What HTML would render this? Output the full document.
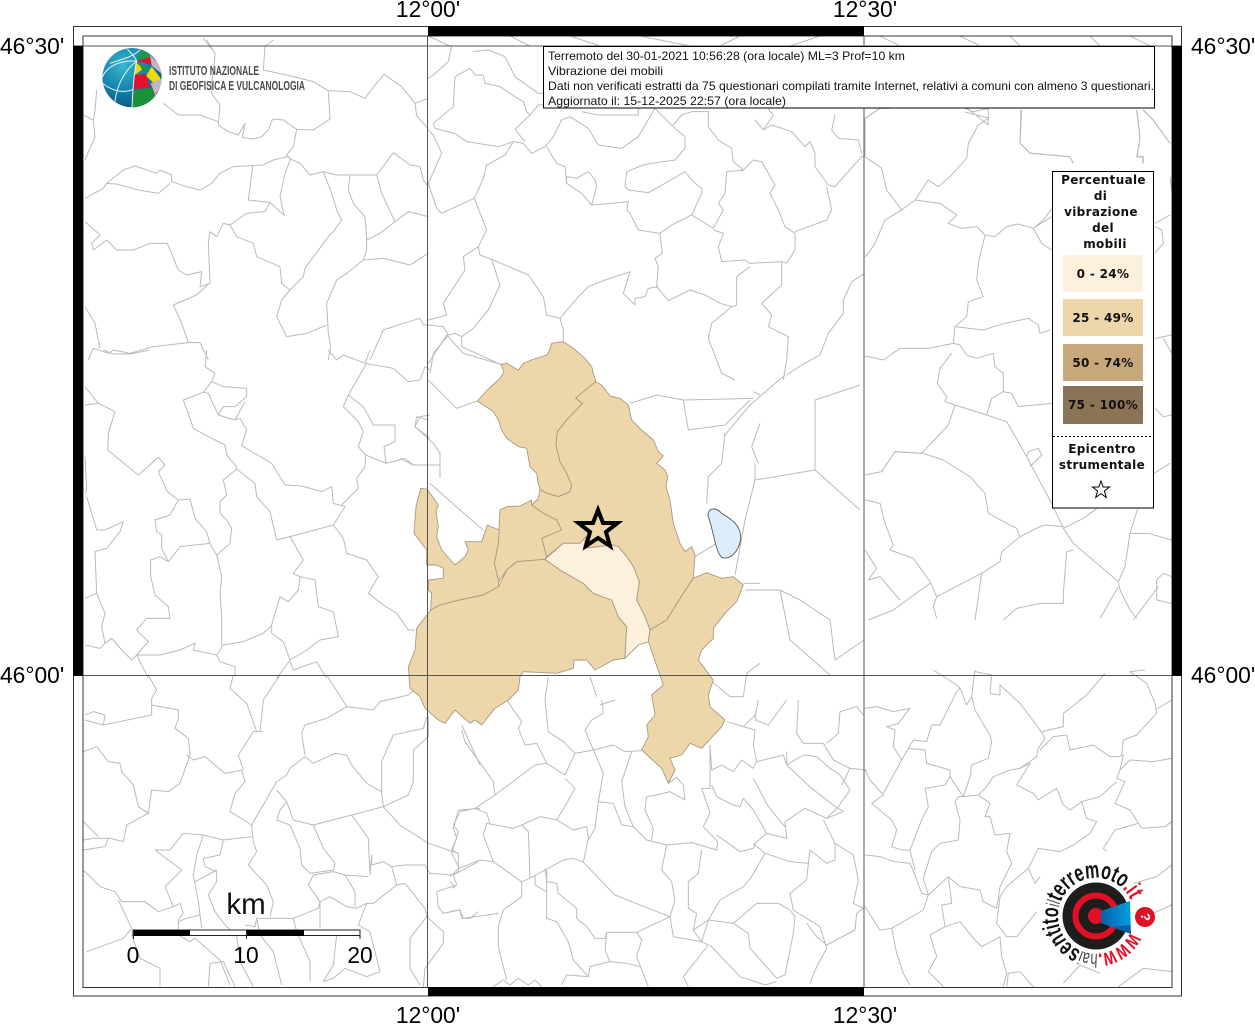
<!DOCTYPE html>
<html><head><meta charset="utf-8"><title>Vibrazione dei mobili</title>
<style>
html,body{margin:0;padding:0;background:#fff;width:1255px;height:1024px;overflow:hidden}
svg{display:block;position:absolute;left:0;top:0}
.m path{fill:none;stroke:#bababa;stroke-width:1;vector-effect:non-scaling-stroke;stroke-linejoin:round}
.r path{fill:#edd6a9;stroke:#a89a80;stroke-width:.9;vector-effect:non-scaling-stroke;stroke-linejoin:round}
.l{font-family:"Liberation Sans",sans-serif;font-size:22.8px;fill:#000}
.h{font-family:"Liberation Sans",sans-serif;font-size:12px;fill:#111}
.g{font-family:"DejaVu Sans",sans-serif;font-weight:bold;font-size:12px;letter-spacing:.32px;fill:#111;text-anchor:middle}
</style></head><body>
<svg width="1255" height="1024" viewBox="0 0 1255 1024" xmlns="http://www.w3.org/2000/svg">
<defs>
<clipPath id="mp"><rect x="83" y="36" width="1089" height="951"/></clipPath>
<clipPath id="gb"><circle cx="396" cy="233" r="89"/></clipPath>
<radialGradient id="bl" cx="35%" cy="30%" r="80%"><stop offset="0" stop-color="#37b6d2"/><stop offset=".55" stop-color="#127fa6"/><stop offset="1" stop-color="#0b4f74"/></radialGradient>
<linearGradient id="cn" x1="0" x2="1" y1="0" y2="0"><stop offset="0" stop-color="#0a5fa8"/><stop offset="1" stop-color="#00a0e0"/></linearGradient>
<path id="arc" d="M1130.400,932 A38,38 0 1 1 1134,916 A38,38 0 0 1 1130.400,932.500"/>
</defs>

<g clip-path="url(#mp)">
<!-- upper left -->
<g class="m" transform="translate(80,40) scale(.33333)">
<path d="M380,0L405,40L403,70L395,125L395,160L420,195L415,255L445,275L475,285L495,250L487,292L520,297L545,290L565,270L578,237L610,240L650,268L700,270L750,237L745,155"/>
<path d="M580,0L555,20L550,90L620,105L700,125L745,152L810,155L855,175L885,135L912,103L965,140L1005,190L1045,175M1005,190L1010,228L1045,265"/>
<path d="M250,190L295,225L360,225L415,245M50,150L45,215L40,240L45,290L15,360M10,225L40,240"/>
<path d="M650,268L640,320L620,345L625,350L580,360L550,375L520,377L460,380L420,400L395,430L360,450L320,440L275,425L275,405L240,390L230,400L165,378L130,390L80,430L110,432L175,450L235,460L270,430M80,430L70,445L15,475"/>
<path d="M518,377L505,480L570,487L600,515L612,525L600,470L615,400L632,357L660,370L690,405L730,395L770,405L810,405L890,405L940,338L990,375L1020,380L1030,420L1045,440M625,350L632,357"/>
<path d="M570,487L555,515L500,520L450,555L430,550L410,590L390,575L385,610L390,730L360,740L365,695L320,705L295,690L262,610L210,610L160,630L110,630L80,600L40,630L35,610L60,585L15,545"/>
<path d="M450,555L470,590L520,610L530,650L600,680L605,730L630,750L670,710L675,685L745,590L760,575L785,540L770,510L755,460L730,395"/>
<path d="M810,405L805,450L820,490L855,530L860,595L860,630L850,660L800,700L770,720L740,790L745,880L752,920L745,960M630,750L605,780L590,830L620,890L680,880L740,855"/>
<path d="M860,600L900,580L945,545L985,515L1045,530M890,405L905,460L945,545M850,660L910,655L990,675L1045,640"/>
<path d="M388,730L350,765L280,795L305,850L325,908L360,908L385,960M325,908L220,920L150,940L100,930L85,940L40,925L25,960M15,800L45,850L60,925M870,960L910,870L970,850L1020,835L1030,855L1045,855"/>
</g>
<!-- top centre -->
<g class="m" transform="translate(425,40) scale(.33333)">
<path d="M80,15L70,65L25,105L10,115M143,35L190,30L240,50L270,110L340,160L355,160M90,110L135,85L150,105L175,105L180,130L225,140L270,170L295,185L305,215L315,225L340,195L355,195"/>
<path d="M90,110L85,200L25,250L30,265L90,280L125,305L220,320L265,305L295,310L320,340L360,320L385,290L410,240L435,230L490,265L520,315L590,325L640,290L690,205L750,265L780,290L780,325L750,360L680,370L655,375L605,395L600,440L610,450L670,458L720,430L780,395L805,425L830,445L830,460L800,525L740,555L705,580L640,570L615,520L605,510L610,485L560,490L500,495L470,460L425,430L420,380L395,370L365,320"/>
<path d="M300,305L270,268L315,225M265,305L240,345L185,375L175,415L148,475L185,570L160,620L165,645L200,658L310,705L355,770L365,825L405,835L415,870L415,905M148,475L50,520L35,505L10,430M10,430L50,340L25,285L10,270M425,430L425,410L455,415L490,395L510,420L515,440L500,495"/>
<path d="M470,215L520,225L640,225L640,205M745,255L770,225L800,215L850,215L850,260L880,300L920,325L925,365L955,390L905,395L900,460L880,490L895,510L865,565L800,525"/>
<path d="M990,240L1015,270L1045,225L1030,207M1015,270L1040,255L1100,275L1140,320L1155,305L1170,340L1170,380L1210,435L1230,440L1265,400L1310,350L1320,350"/>
<path d="M985,360L950,395M985,360L1010,365L1050,435L1035,460L1060,510L1080,560L1110,580L1110,630L1085,670L1070,665L975,670L960,660L890,665L880,620L895,580L865,570"/>
<path d="M705,580L712,640L690,655L700,680L695,740L730,782L795,750L840,765L885,790L920,800L935,795L935,710L975,680M1110,575L1205,540L1220,510L1205,440M1070,665L1070,735L1010,790L1040,825L1030,860L1090,890L1085,960L1075,1020M920,800L860,850L850,895L890,1000L930,1020"/>
<path d="M700,740L670,745L660,770L630,775L630,795L595,760L615,695L540,720L490,740L460,770L405,835M1320,700L1280,725L1255,780L1255,820L1210,880L1185,945L1130,975L1085,1005M1230,225L1220,270L1240,295L1300,300L1310,340"/>
<path d="M160,620L115,650L120,690L55,790L65,825L10,840M200,658L225,735L190,810L145,865L110,890L90,880L70,885L55,860L10,855M110,890L110,920L230,975M70,885L25,940L15,1000"/>
</g>
<!-- top strip above title -->
<g class="m">
<path d="M203,38L215,53M428,36L450,46M510,36L530,46M570,36L600,46M640,36L690,46M740,36L720,46M820,36L790,46M1010,36L1020,46M1090,36L1100,46M1130,36L1150,46M880,36L900,46M960,36L980,46"/>
<path d="M866,118L880,108L890,108M967,108L988,125L988,118L965,112M1021,110L1020,143L1030,153L1070,157L1073,163M1137,110L1140,138L1137,157L1143,157L1143,163M1143,110L1153,120L1170,143"/>
<path d="M724,436L750,405L785,375M755,463L755,480L745,520L735,575M755,480L815,470L815,400L860,385M815,470L860,510M780,590L800,600L830,620L835,660L864,640M745,590L780,590L790,640L830,675"/>
</g>
<!-- around the felt area -->
<g class="m" transform="translate(400,330) scale(.33333)">
<path d="M85,150L170,235L232,213M85,270L50,260L45,290L100,340L120,370L120,445M90,460L180,540L250,600M0,385L40,405L120,405M303,103L190,70L140,15M140,15L85,100"/>
<path d="M690,220L770,195L850,210L1060,205M850,210L865,300L975,285L1050,210M975,310L965,400L925,440L920,520M950,640L885,680M1030,760L1080,760M1080,280L1055,350L1075,400M1080,195L1060,185"/>
<path d="M570,1040L590,1100M445,1040L435,1110M930,1050L990,1100L1030,1100L1040,1030L1080,1000"/>
</g>
<!-- right -->
<g class="m" transform="translate(860,100) scale(.33333)">
<path d="M15,55L60,25L90,25M15,55L15,170L65,205L80,270L125,330L165,300L205,240L235,260L270,230L320,175L325,130L355,75L385,55L385,25L340,35L315,25M125,330L75,360L45,430L25,460L15,470"/>
<path d="M165,300L240,310L290,345L265,370L305,385L350,380L375,405L405,410L440,380L475,372L520,385L550,360L580,320M520,385L545,430L575,450M520,385L575,350"/>
<path d="M375,405L355,490L350,540L370,590L325,605L320,650L285,680L280,730L205,745L120,745L70,780L25,770L15,770M285,680L370,690L435,670L505,655L535,675L540,700L570,690"/>
<path d="M280,730L300,735L320,765L350,775L400,760L405,800L430,820L430,875L395,895L380,945L285,915L255,905L260,890L232,850L240,805L275,760M430,875L455,880L475,920L575,910"/>
<path d="M285,915L265,975L185,1060L105,1055L65,1115L15,1125M380,945L440,965L500,1070L575,1210L610,1285L640,1330L775,1445L780,1470L810,1530L830,1555M500,1070L505,1055L535,1045L545,1065L510,1100"/>
<path d="M105,1055L190,1060L250,1080L330,1130L375,1180L385,1240L440,1270L470,1285L480,1310L550,1275L610,1280M480,1310L425,1355L420,1385L365,1420L345,1560M15,1200L60,1210L75,1270L100,1335L90,1350L160,1375L210,1445L230,1490L365,1420M210,1450L100,1530L25,1560M230,1490L220,1520L230,1555M15,1350L50,1405L25,1440L60,1430L120,1500"/>
<path d="M610,1285L670,1255L725,1215L720,1170L725,1125L755,1110L770,1130L845,1155L850,1110M845,1155L835,1220L810,1300L795,1400L775,1445M850,1140L930,1090M810,1300L865,1300L935,1320M640,1350L620,1355L610,1480L610,1510L540,1510L470,1525L430,1560M775,1460L720,1555M890,1440L910,1420L935,1430M890,1440L890,1500L935,1510M895,1460L820,1560"/>
<path d="M485,30L480,130L510,160L630,170L640,190M830,30L840,115L830,170L850,170L850,190M850,30L880,60L930,130M885,380L905,390L910,430L885,460M885,715L935,705M910,715L935,760M885,925L910,950L935,945M930,230L935,270M930,345L885,370"/>
</g>
<!-- left middle -->
<g class="m" transform="translate(80,350) scale(.33333)">
<path d="M15,110L55,160L15,165M55,160L105,185L85,250L83,300L175,375L235,322L255,345L235,365L262,425L295,450L330,447L345,505L380,545L390,582L410,615L450,580L455,535L440,510L420,490L420,455L440,435L430,390L470,357L525,400L530,440L570,485L590,570L630,560L760,525L795,470L760,460L755,410L725,425L665,408L615,405L575,340L485,287L500,240L480,205L465,210L415,195L385,130L370,127L310,150L330,205L340,235L395,265L435,285L440,315L470,350L470,357"/>
<path d="M395,95L370,127M395,95L430,110L500,115L500,140L465,170L430,170L415,195M495,155L465,210M380,0L375,50L405,70L395,95"/>
<path d="M295,450L270,495L225,510L230,545L245,555L245,595L265,635L300,590L390,580M265,635L240,620L212,630L212,680L225,735L265,770L270,805L200,805L170,840L205,875L170,915L240,915L300,900L345,880L340,900L410,915L430,885L490,875L550,850L575,825L600,740L625,755L655,720L660,680L640,670L670,630L630,560"/>
<path d="M410,615L425,680L420,730L425,800L425,885M575,825L575,850L610,875L630,930L680,900L720,870L775,860L760,785L715,770L705,690L660,680M410,915L420,935L465,950L465,980M170,915L205,985M630,930L590,985M630,935L640,960L710,935L740,985"/>
<path d="M15,320L20,420L15,430M20,440L50,540L75,540L130,515L120,545L80,595L45,605L50,730L15,745M50,730L75,790L65,830L75,880L60,895L15,885M75,880L95,865L125,900L155,930L170,915"/>
<path d="M760,525L790,565L800,610L860,630L895,680L865,730L910,765L950,790L985,840L1005,840M860,40L805,135L790,170L835,215L850,245L835,290L857,315L855,350L830,385L835,415L785,465M805,135L850,170L880,225L945,225L945,275L912,290L918,340L975,325L1000,345L1045,345M857,315L918,340"/>
<path d="M745,0L770,30L790,15L855,40L870,0M855,40L940,55L985,95L1020,90L1035,50L1050,60M1050,195L1020,200L1005,230L1050,265M70,0L100,12L150,12L210,0"/>
</g>
<!-- lower left -->
<g class="m" transform="translate(80,675) scale(.33333)">
<path d="M205,0L230,45L215,70L215,120L70,150L15,135M15,120L40,110L75,120L70,150M215,90L295,105L295,130L285,160L325,190L330,240L300,325L265,350L215,345L205,415L175,395L160,330L125,290L120,265L85,260L50,215L10,230"/>
<path d="M320,240L340,255L375,245L435,295L485,285L495,320L465,355L450,410L515,450L520,500L530,530L505,570L560,630L580,680L570,725M460,0L450,40L500,85L530,170L545,170L520,170L475,240L490,285M600,0L550,75L540,170"/>
<path d="M515,450L590,320L620,300L630,280L675,245L700,265L765,235L800,240L815,270L860,325L905,350L910,395L985,360L1000,320L1000,225L1045,185L1045,125M740,0L800,95L880,105L900,80L985,60L1010,40M800,95L740,130L675,150L665,175L675,240M1040,125L1030,160L940,180L905,260L905,350"/>
<path d="M590,345L620,380L640,435L700,450L815,420L910,395L960,450L1045,505L1135,535L1135,590L1120,600L1195,560M620,380L600,405L590,435L630,450L660,520L665,570L690,595L760,585L765,565L730,520L700,450"/>
<path d="M815,420L865,490L870,600L875,540L875,570L910,560L935,575L975,570L1035,570L1050,595L1120,600L1130,630L1070,650L1075,695L1090,715L1140,705L1145,730L1170,730L1195,710"/>
<path d="M950,630L880,685L860,685L835,750L870,770L900,890L860,905L795,880L760,910L730,920M935,575L950,630L975,625L1035,700L1040,725L1090,770L1090,805L1035,880L1030,935M1040,725L990,790L990,880L1020,930"/>
<path d="M860,685L830,700L800,695L750,665L720,680L715,700L640,730L530,730L540,780L580,830L605,930M700,600L685,630L720,680L720,760M795,600L825,650L825,695M700,600L760,590L795,600L865,605M640,730L650,770L690,860L690,920M770,780L760,870L730,920"/>
<path d="M0,590L15,590L60,635L105,650L125,680L195,680L235,710L280,695L300,685L310,715L295,735L295,780L330,800L345,790L420,855L450,930M115,675L155,760L130,790L20,830M155,780L180,850L240,880L240,935"/>
<path d="M280,695L255,635L305,585L225,525L270,525L310,475L370,480L430,495L515,485M370,480L350,540L340,600L355,680L360,720L320,730L295,740M430,495L420,540L370,550L375,575L410,590L410,620L385,660L405,710L440,755L470,780L480,860L520,935M345,620L410,585M355,680L365,760M495,750L525,755L530,730"/>
<path d="M205,415L140,450L130,500L90,490L40,490L10,495M10,525L75,515L85,490M10,440L55,485M385,935L390,865L430,860L465,935"/>
<path d="M1135,405L1200,400M1135,405L1120,460L1130,490L1115,525L1135,535M1145,150L1200,270"/>
</g>
<!-- bottom centre -->
<g class="m" transform="translate(450,700) scale(.33333)">
<path d="M170,0L215,65L205,85L225,135L260,130L290,190L345,225L375,160L430,150L490,135L525,155L575,152M285,0L295,95L340,125L375,160M450,15L495,0M455,0L460,40L425,60L405,90L430,150"/>
<path d="M35,90L45,125L130,245L135,285L195,240L255,195L290,190M135,285L75,325L30,335L10,375L25,395L5,460L28,505L90,480L130,485L100,405L110,370L190,385L215,375L270,350L320,360M75,325L110,340L120,370M215,375L235,395L240,535L215,545L130,485M240,535L340,480L370,475L400,487L495,585L595,625L660,650L560,697L470,697L465,715L435,715L410,680L380,655L380,625L325,580L320,550L290,545L285,505"/>
<path d="M345,235L375,265L350,310L320,360L370,390L410,380L415,415L400,487M430,150L460,220L445,305L435,385L415,420M445,305L490,310L515,375L550,380L590,420L650,435L725,428L800,450L803,425L760,380L780,340L755,265L780,265L780,135M545,155L515,245L525,320L550,380M590,290L620,285L660,275L705,300L700,255L680,232L655,250M590,290L585,330L610,385L605,420"/>
<path d="M780,135L785,210L815,195L850,215L875,180L910,205L920,185L1000,165L1010,195L1060,165L1100,170L1140,205L1170,225L1200,270L1165,320L1130,355M1010,155L1010,195L1085,265L1150,315L1180,335L1130,355L1065,325L1005,365L1010,415L950,400L910,330L880,295L870,320L850,315L800,290L785,255M920,185L910,135L915,90L880,80L830,65M910,235L955,320L1005,380"/>
<path d="M800,405L870,455L910,445L915,430L950,400M910,430L945,460L1020,485L1075,490L1080,450L1130,490L1155,480L1155,430L1120,360M945,460L905,530L880,560L810,600L775,660L730,690L755,725L670,710L660,650L675,600L665,545L635,510L650,435M755,450L745,520L715,545L715,625L740,640L730,690"/>
<path d="M775,660L850,670L920,610L985,610L1020,630L1035,650L1030,700L1005,825L980,835L945,795L900,745L895,700L850,670M755,725L775,660M755,725L775,735L700,830L715,860M780,735L870,830L945,855L980,845"/>
<path d="M1075,490L1070,540L1020,580L1030,630L1110,680L1130,745L1100,800L1080,850M1155,430L1210,465L1225,540L1210,610L1240,625L1220,640L1215,690L1130,735L1100,710L1070,670M1045,0L1040,100L1060,130L1120,130L1150,180L1200,205L1250,210M1130,130L1165,100L1170,35L1220,20L1240,45M1200,205L1175,255M920,60L915,50L925,0M880,80L920,40M915,60L955,75L1010,0"/>
<path d="M215,545L215,590L160,630L145,680L145,740L170,840M0,635L30,630L40,655L145,640M0,530L28,505M0,545L15,560L5,565M560,697L575,720L560,770L595,860M470,697L465,750L480,785L530,790L570,800M480,785L420,800L415,830L350,825L335,855M290,510L290,655L320,665L355,725L370,780L415,830M255,525L255,555L290,575M130,860L160,840L180,855L205,835L235,855L255,840L275,860"/>
</g>
<!-- bottom right -->
<g class="m" transform="translate(860,670) scale(.33333)">
<path d="M335,80L345,120L390,195L395,215L385,265L335,285L330,320L310,380L270,320L255,345L195,355L205,410L185,450L150,540L125,540L95,530L110,480L95,450L35,400L70,375L30,330L15,300M270,320L270,300L200,280L195,240L145,235L125,270L100,230L105,180L80,170L115,160L150,115L100,125L50,110L15,115M125,270L70,370"/>
<path d="M145,235L160,210L200,215L215,165L240,165L290,65L300,55L320,105L335,80L345,0M220,0L290,45L300,55M390,70L395,15L345,5M390,70L420,75L420,45L480,100L540,180L555,205L535,235L530,260L480,295L450,300L400,320L380,350L355,375L310,380L295,380L285,395L300,450L295,510L240,520L215,545L190,625L205,675L265,620L300,650L360,660L370,695L410,715L420,650L455,580L440,545L450,490L405,495L390,440L375,440L390,400L355,375"/>
<path d="M545,185L610,170L610,130L680,75L735,10M540,240L580,200L620,195L630,240L700,225L750,260L775,260L790,255L780,300L810,270L880,275L935,265M780,300L770,325L795,335L765,400L810,420L835,460L845,475L915,470L935,455"/>
<path d="M470,345L510,280L480,295M470,345L520,370L535,390L590,355L610,405L630,420L665,395L680,445L710,455L690,490L640,525L600,545L535,535L505,595L440,650L420,680L410,760L440,800L470,800L530,725M420,800L425,860L440,910L430,950M505,595L525,640L540,620M740,545L730,535L765,480L835,460M665,395L720,380L770,335"/>
<path d="M205,675L185,670L165,615L150,580L105,575L60,560L15,555M150,540L165,600M205,675L190,720L95,775L60,780L15,710M95,775L110,850L130,910L150,945M265,620L275,700L245,705L255,770L210,795L230,860L205,905L250,950M255,770L300,755L345,810L365,830L420,800"/>
<path d="M855,0L810,5L860,40L885,100L890,130L830,195L790,210L785,255M935,90L885,120M775,950L850,895L935,905M440,950L445,910L480,905L520,950M610,940L660,885L720,910M820,640L890,620L935,585M880,730L935,705"/>
</g>

<!-- felt regions -->
<g class="r" transform="translate(400,330) scale(.33333)">
<path d="M232,213L262,180L300,145L312,125L303,103L320,100L355,120L370,100L400,88L440,75L447,65L455,40L490,35L520,55L555,85L575,110L587,155L550,185L527,205L548,220L500,270L472,305L468,345L480,395L500,430L515,465L510,485L475,500L440,490L420,478L415,462L410,430L390,410L380,355L355,350L320,325L305,300L295,270L280,245Z"/>
<path d="M587,155L605,165L630,198L660,205L685,225L695,270L725,300L760,330L775,365L790,378L770,400L795,420L803,440L798,470L810,510L820,580L840,640L855,665L875,650L885,675L880,745L850,790L825,830L800,870L750,900L735,860L710,810L718,755L700,710L680,680L655,650L640,645L550,655L558,620L540,640L490,640L440,680L425,625L480,600L470,570L430,550L395,525L415,505L420,478L440,490L475,500L510,485L515,465L500,430L480,395L468,345L472,305L500,270L548,220L527,205L550,185Z"/>
<path d="M300,540L320,530L360,528L395,510L395,525L430,550L470,570L485,600L425,625L440,680L435,688L350,695L320,720L296,755L283,700L295,640L298,570Z"/>
<path d="M62,475L82,478L115,525L108,545L115,590L110,620L125,660L165,705L195,680L205,660L195,635L245,635L262,585L298,600L295,640L283,700L296,755L296,770L250,795L170,812L120,825L92,840L95,790L85,780L85,750L130,745L130,715L110,705L80,705L80,660L42,610L48,530Z"/>
<path d="M435,688L480,720L550,760L580,790L635,810L655,860L680,890L675,985L640,990L585,1020L560,990L522,990L520,1015L470,1030L370,1025L360,1040L355,1080L325,1110L285,1135L245,1185L225,1170L210,1180L165,1140L135,1180L115,1170L75,1135L60,1100L30,1075L25,1010L45,960L50,895L92,840L120,825L170,812L250,795L296,770L320,720L350,695Z"/>
<path style="fill:#fdf0dc" d="M435,688L490,640L540,640L558,620L550,655L640,645L655,650L680,680L700,710L718,755L710,810L735,860L750,900L745,935L715,945L675,985L680,890L655,860L635,810L580,790L550,760L480,720Z"/>
<path d="M880,745L920,728L965,745L1000,740L1030,765L1010,815L975,850L940,895L940,925L905,960L895,990L925,1030L940,1050L925,1095L930,1130L975,1170L965,1190L905,1255L870,1240L845,1275L810,1285L825,1320L805,1360L785,1315L725,1260L745,1220L740,1185L765,1155L755,1095L790,1065L745,935L750,900L800,870L825,830L850,790Z"/>
<path style="fill:#dceefb;stroke:#555" d="M925,560C920,535 945,528 965,550C1000,570 1025,590 1022,630C1015,665 990,692 965,682C945,660 945,620 925,560Z"/>
</g>

<!-- epicentre star -->
<path d="M598,510L603,523L617.500,523L606,532L610,546L598,538L586,546L590,532L578.500,523L593,523Z" fill="#edd6a9" stroke="#000" stroke-width="4" stroke-linejoin="miter"/>
</g>

<!-- grid -->
<g stroke="#555" stroke-width="1" fill="none">
<path d="M427.500,36V987M864,36V987M83,46H1172M83,675.500H1172"/>
</g>
<!-- frame -->
<g fill="none" stroke="#333" stroke-width="1">
<rect x="73.500" y="26.500" width="1108" height="969.500"/>
<rect x="83" y="36" width="1089" height="951.500"/>
<path d="M73.500,46H83M73.500,675.500H83M1172,46H1181.500M1172,675.500H1181.500"/>
</g>
<g fill="#000">
<rect x="73" y="46" width="10" height="630"/>
<rect x="1172" y="46" width="10" height="630"/>
<rect x="428" y="26" width="436" height="10"/>
<rect x="428" y="987" width="436" height="9"/>
</g>

<!-- tick labels -->
<text class="l" x="428" y="17" text-anchor="middle">12°00'</text>
<text class="l" x="865" y="17" text-anchor="middle">12°30'</text>
<text class="l" x="428" y="1023" text-anchor="middle">12°00'</text>
<text class="l" x="865" y="1023" text-anchor="middle">12°30'</text>
<text class="l" x="0" y="54">46°30'</text>
<text class="l" x="0" y="683">46°00'</text>
<text class="l" x="1191" y="54">46°30'</text>
<text class="l" x="1191" y="683">46°00'</text>

<!-- title box -->
<rect x="543.500" y="46.500" width="611" height="61.500" fill="#fff" stroke="#000" stroke-width="1"/>
<text class="h" x="548" y="60" textLength="357" lengthAdjust="spacingAndGlyphs">Terremoto del 30-01-2021 10:56:28 (ora locale) ML=3 Prof=10 km</text>
<text class="h" x="548" y="75" textLength="115" lengthAdjust="spacingAndGlyphs">Vibrazione dei mobili</text>
<text class="h" x="548" y="90" textLength="606" lengthAdjust="spacingAndGlyphs">Dati non verificati estratti da 75 questionari compilati tramite Internet, relativi a comuni con almeno 3 questionari.</text>
<text class="h" x="548" y="105" textLength="238" lengthAdjust="spacingAndGlyphs">Aggiornato il: 15-12-2025 22:57 (ora locale)</text>

<!-- legend -->
<rect x="1052.500" y="171.500" width="101" height="336.500" fill="#fff" stroke="#000" stroke-width="1"/>
<text class="g" x="1103.500" y="184">Percentuale</text>
<text class="g" x="1100.500" y="200">di</text>
<text class="g" x="1101" y="216">vibrazione</text>
<text class="g" x="1103" y="232">del</text>
<text class="g" x="1105" y="248">mobili</text>
<rect x="1063" y="255" width="80" height="37" fill="#fdf0dc"/>
<rect x="1063" y="299" width="80" height="37" fill="#edd6a9"/>
<rect x="1063" y="344" width="80" height="37" fill="#c8a87b"/>
<rect x="1063" y="386" width="80" height="38" fill="#8b7355"/>
<text class="g" x="1103" y="278">0 - 24%</text>
<text class="g" x="1103" y="322">25 - 49%</text>
<text class="g" x="1103" y="367">50 - 74%</text>
<text class="g" x="1103" y="409">75 - 100%</text>
<path d="M1053,436.500H1153" stroke="#000" stroke-width="1" stroke-dasharray="2 2"/>
<text class="g" x="1102" y="453">Epicentro</text>
<text class="g" x="1102" y="469">strumentale</text>
<path d="M1101,481L1103.100,487H1109.500L1104.400,491L1106.300,497.500L1101,493.600L1095.700,497.500L1097.600,491L1092.500,487H1098.900Z" fill="#fff" stroke="#000" stroke-width="1"/>

<!-- INGV logo -->
<g transform="scale(.33333)">
<g clip-path="url(#gb)">
<circle cx="396" cy="233" r="89" fill="url(#bl)"/>
<path d="M408,183L425,150L450,165L455,172Z" fill="#1d9a45"/>
<path d="M408,183L455,170L453,195L430,188Z" fill="#e3112f"/>
<path d="M406,188L430,205L403,226Z" fill="#f2d90e"/>
<path d="M412,185L452,210L430,215Z" fill="#23953e"/>
<path d="M438,228L455,200L482,235L468,255Z" fill="#efd90f"/>
<path d="M404,224L438,222L450,262L400,268Z" fill="#e1122f"/>
<path d="M400,272L455,264L468,290L440,325L395,325Z" fill="#1a9138"/>
<path d="M450,165L490,205V225L455,197Z" fill="#c5b4c4"/>
<path d="M486,235L490,280L468,292L452,250Z" fill="#c5b4c4"/>
<path d="M468,280L480,270L470,295Z" fill="#e3112f"/>
<g fill="none" stroke="#e8f4f6" stroke-width="3">
<path d="M410,183C360,180 320,200 308,230M410,183C370,215 350,260 345,305M410,183C400,230 398,280 396,325M382,148C395,160 405,170 410,183M308,250C340,275 370,280 400,268M330,190C360,180 400,170 420,150"/>
</g>
</g>
</g>
<text x="169" y="75" font-family="'Liberation Sans',sans-serif" font-weight="bold" font-size="12.500" fill="#4a4a4a" textLength="90" lengthAdjust="spacingAndGlyphs">ISTITUTO NAZIONALE</text>
<text x="169" y="90" font-family="'Liberation Sans',sans-serif" font-weight="bold" font-size="12.500" fill="#4a4a4a" textLength="136" lengthAdjust="spacingAndGlyphs">DI GEOFISICA E VULCANOLOGIA</text>

<!-- scale bar -->
<rect x="133" y="930" width="227" height="5.500" fill="#fff" stroke="#222" stroke-width="1"/>
<rect x="133" y="930" width="57" height="6" fill="#000"/>
<rect x="246" y="930" width="58" height="6" fill="#000"/>
<path d="M133.500,930V939M246.500,930V939M360,930V939" stroke="#222" stroke-width="1"/>
<text class="l" x="133" y="963" text-anchor="middle">0</text>
<text class="l" x="246" y="963" text-anchor="middle">10</text>
<text class="l" x="360" y="963" text-anchor="middle">20</text>
<text x="246" y="914" text-anchor="middle" font-family="'Liberation Sans',sans-serif" font-size="29.500" fill="#111">km</text>

<!-- haisentito logo -->
<circle cx="1096" cy="916" r="33.500" fill="#1d1d1b"/>
<circle cx="1096" cy="916" r="20.500" fill="none" stroke="#e30f26" stroke-width="6"/>
<circle cx="1096" cy="916" r="8" fill="#e30f26"/>
<path d="M1101,911L1130,901L1131,934L1101,923Z" fill="url(#cn)"/>
<path d="M1112,927L1130,925L1131,934Z" fill="#0b5ea5"/>
<circle cx="1145" cy="917" r="10" fill="#e30f26"/>
<text x="1145" y="921" font-family="'Liberation Sans',sans-serif" font-weight="bold" font-size="13" fill="#fff" text-anchor="middle" transform="rotate(90 1145 917)">?</text>
<text font-family="'Liberation Sans',sans-serif" font-size="24" font-weight="bold" fill="#111">
<textPath href="#arc" textLength="205" lengthAdjust="spacingAndGlyphs"><tspan fill="#e30f26">www.</tspan><tspan fill="#444" font-size="19" font-weight="normal">hai</tspan><tspan>sentito</tspan><tspan fill="#555" font-size="19" font-weight="normal">il</tspan><tspan>terremoto</tspan><tspan fill="#e30f26">.it</tspan></textPath>
</text>
</svg>
</body></html>
